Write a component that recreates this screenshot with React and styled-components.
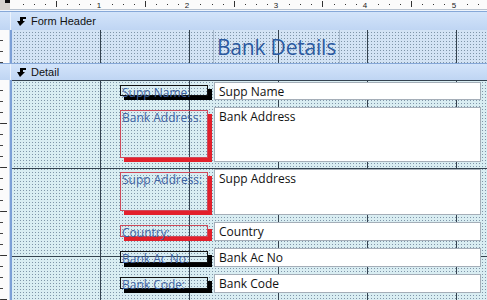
import React from 'react';
import styled, { createGlobalStyle } from 'styled-components';

const INCH = 88.7;

const GlobalStyle = createGlobalStyle`
  html, body {
    margin: 0;
    padding: 0;
    background: #ffffff;
  }
  body {
    font-family: "Open Sans", "Liberation Sans", sans-serif;
  }
`;

const Designer = styled.div`
  width: 487px;
  height: 300px;
  overflow: hidden;
  display: flex;
  flex-direction: column;
  background: #ffffff;
`;

const TopRow = styled.div`
  display: flex;
  height: 10px;
  flex: none;
`;

const Corner = styled.div`
  width: 10px;
  background: #d6d3ce;
  display: flex;
  justify-content: flex-end;
  align-items: flex-start;

  &::after {
    content: "";
    width: 5px;
    height: 3px;
    background: #111;
  }
`;

const RulerStrip = styled.div`
  flex: 1;
  background: #fbfbfb;
  border-bottom: 1px solid #b9c3cf;
`;

const Spacer = styled.div`
  height: 1px;
  flex: none;
  background: #eef4fc;
`;

const Bar = styled.div`
  height: ${({ $h }) => $h}px;
  flex: none;
  display: flex;
  box-sizing: border-box;
  border-top: 1px solid #86a8d8;
  background: linear-gradient(#d3e4fa, #bfd5f3);
`;

const BarRuler = styled.div`
  width: 10px;
  flex: none;
  border-right: 1px solid #eaf2fd;
`;

const BarTitle = styled.div`
  display: flex;
  align-items: center;
  gap: 4px;
  padding-left: 6px;
  font-family: "Liberation Sans", Arial, sans-serif;
  font-size: 11px;
  color: #111;
`;

const Section = styled.div`
  display: flex;
  height: ${({ $h }) => ($h ? `${$h}px` : 'auto')};
  flex: ${({ $h }) => ($h ? 'none' : '1')};
`;

const VRuler = styled.div`
  width: 9px;
  flex: none;
  background-color: #fbfbfb;
  background-image:
    repeating-linear-gradient(to bottom, transparent 0 43px, #333 43px 44px),
    repeating-linear-gradient(to bottom, transparent 0 10px, #444 10px 11px);
  background-size: 6px 100%, 3px 100%;
  background-repeat: no-repeat;
  background-position: 1px 0, 0 0;
  border-right: 1px solid #c9d9ef;
`;

const Strip = styled.div`
  width: 2px;
  flex: none;
  background: #7c9fd6;
`;

const Canvas = styled.div`
  flex: 1;
  background-color: ${({ $tint }) => $tint};
  background-image:
    linear-gradient(to right, #34424f 1px, transparent 1px),
    ${({ $rows }) =>
      $rows
        ? 'linear-gradient(to bottom, #34424f 1px, transparent 1px)'
        : 'linear-gradient(transparent, transparent)'},
    linear-gradient(to right, ${({ $tint }) => $tint} 2px, transparent 2px),
    linear-gradient(to bottom, transparent 2px, #7f95a8 2px);
  background-size: 89px 100%, 100% 88px, 3px 3px, 3px 3px;
  background-position: 88px 0, 0 0, 0 0, 0 0;
`;

const HeaderCanvas = styled(Canvas)`
  display: flex;
`;

const TitleLabel = styled.div`
  margin-left: 201px;
  width: 127px;
  box-sizing: border-box;
  border-left: 1px solid #a7b9cc;
  border-right: 1px solid #a7b9cc;
  display: flex;
  align-items: center;
  justify-content: center;
  font-family: "Open Sans", "Liberation Sans", sans-serif;
  font-size: 21px;
  letter-spacing: -0.2px;
  color: #2c5aa0;
`;

const Rows = styled.div`
  display: flex;
  flex-direction: column;
  gap: 7px;
  padding: 2px 0 0 108px;
`;

const Row = styled.div`
  display: flex;
  height: ${({ $h }) => $h}px;
`;

const Label = styled.div`
  width: 88px;
  flex: none;
  box-sizing: border-box;
  margin: 3px 0 4px;
  padding: 0 1px;
  border: 1px solid ${({ $tone }) => ($tone === 'red' ? '#cf4a5a' : '#111')};
  box-shadow: 4px 4px 0 0 ${({ $tone }) => ($tone === 'red' ? '#e3202b' : '#000')};
  font-size: 12px;
  line-height: 13px;
  color: #3f63a2;
  white-space: nowrap;
`;

const Field = styled.div`
  margin-left: 6px;
  width: 267px;
  flex: none;
  box-sizing: border-box;
  background: #ffffff;
  border: 1px solid #a5aeb8;
  padding: 1px 4px;
  font-size: 12px;
  line-height: 16px;
  color: #111;
  white-space: nowrap;
`;

const SectionIcon = () => (
  <svg width="10" height="9" viewBox="0 0 10 9">
    <polygon points="3,0 9,0 9,2 6,2 6,4 8,4 3,9 0,4 3,4" fill="#000" />
  </svg>
);

const HRuler = () => {
  const ticks = [];
  for (let i = 1; i < 48; i++) {
    if (i % 8 === 0) continue;
    const x = Math.round(2 + (i * INCH) / 8);
    const half = i % 4 === 0;
    ticks.push(
      <rect key={i} x={x} y={half ? 1 : 4} width="1" height={half ? 6 : 1} fill="#333" />
    );
  }
  const numbers = [1, 2, 3, 4, 5].map((n) => (
    <text
      key={n}
      x={Math.round(2 + n * INCH - 2)}
      y="8"
      fontSize="8"
      textAnchor="middle"
      fontFamily="Liberation Sans, Arial, sans-serif"
      fill="#222"
    >
      {n}
    </text>
  ));
  return (
    <svg width="477" height="9" viewBox="0 0 477 9" style={{ display: 'block' }}>
      {ticks}
      {numbers}
    </svg>
  );
};

const fields = [
  { name: 'Supp Name', h: 18, tone: 'black' },
  { name: 'Bank Address', h: 55, tone: 'red' },
  { name: 'Supp Address', h: 46, tone: 'red' },
  { name: 'Country', h: 19, tone: 'red' },
  { name: 'Bank Ac No', h: 19, tone: 'black' },
  { name: 'Bank Code', h: 19, tone: 'black' },
];

export default function App() {
  return (
    <>
      <GlobalStyle />
      <Designer>
        <TopRow>
          <Corner />
          <RulerStrip>
            <HRuler />
          </RulerStrip>
        </TopRow>
        <Spacer />
        <Bar $h={19}>
          <BarRuler />
          <BarTitle>
            <SectionIcon />
            Form Header
          </BarTitle>
        </Bar>
        <Section $h={33}>
          <VRuler />
          <Strip />
          <HeaderCanvas $tint="#d3e3f4">
            <TitleLabel>Bank Details</TitleLabel>
          </HeaderCanvas>
        </Section>
        <Bar $h={17}>
          <BarRuler />
          <BarTitle>
            <SectionIcon />
            Detail
          </BarTitle>
        </Bar>
        <Section>
          <VRuler />
          <Strip />
          <Canvas $tint="#d9edf2" $rows>
            <Rows>
              {fields.map((f) => (
                <Row key={f.name} $h={f.h}>
                  <Label $tone={f.tone}>{f.name}:</Label>
                  <Field>{f.name}</Field>
                </Row>
              ))}
            </Rows>
          </Canvas>
        </Section>
      </Designer>
    </>
  );
}
